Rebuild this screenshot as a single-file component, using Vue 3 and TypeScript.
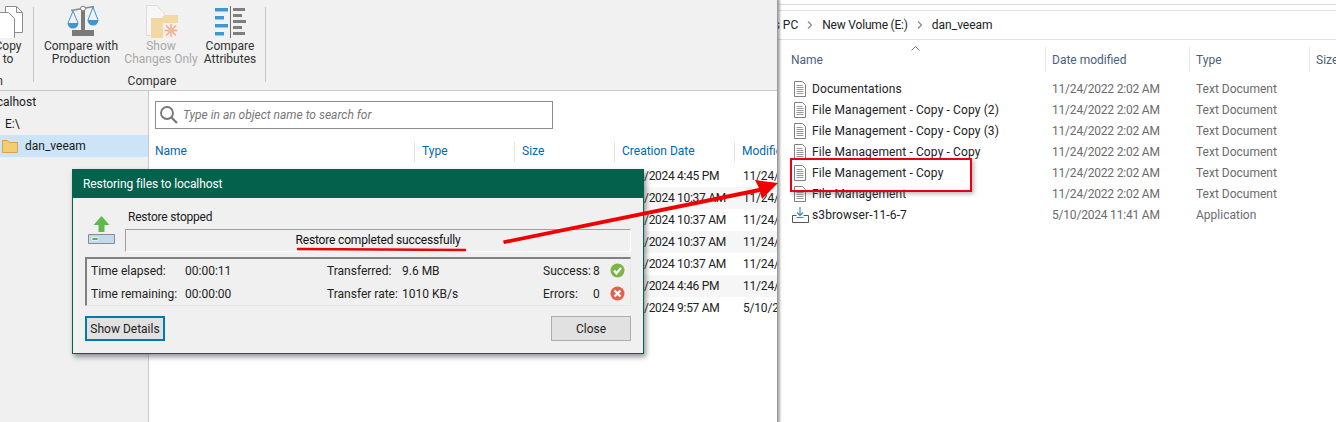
<script setup lang="ts">
type FileRow = { name: string; date: string; type: string; kind: 'doc' | 'app' }

const explorerFiles: FileRow[] = [
  { name: 'Documentations', date: '11/24/2022 2:02 AM', type: 'Text Document', kind: 'doc' },
  { name: 'File Management - Copy - Copy (2)', date: '11/24/2022 2:02 AM', type: 'Text Document', kind: 'doc' },
  { name: 'File Management - Copy - Copy (3)', date: '11/24/2022 2:02 AM', type: 'Text Document', kind: 'doc' },
  { name: 'File Management - Copy - Copy', date: '11/24/2022 2:02 AM', type: 'Text Document', kind: 'doc' },
  { name: 'File Management - Copy', date: '11/24/2022 2:02 AM', type: 'Text Document', kind: 'doc' },
  { name: 'File Management', date: '11/24/2022 2:02 AM', type: 'Text Document', kind: 'doc' },
  { name: 's3browser-11-6-7', date: '5/10/2024 11:41 AM', type: 'Application', kind: 'app' },
]

const backupRows = [
  { created: '1/24/2024 4:45 PM', modified: '11/24/2022 2:02 AM' },
  { created: '1/24/2024 10:37 AM', modified: '11/24/2022 2:02 AM' },
  { created: '1/24/2024 10:37 AM', modified: '11/24/2022 2:02 AM' },
  { created: '1/24/2024 10:37 AM', modified: '11/24/2022 2:02 AM' },
  { created: '1/24/2024 10:37 AM', modified: '11/24/2022 2:02 AM' },
  { created: '1/24/2024 4:46 PM', modified: '11/24/2022 2:02 AM' },
  { created: '1/24/2024 9:57 AM', modified: '5/10/2024 11:41 AM' },
]
</script>

<template>
  <div class="page">
    <section class="veeam">
      <header class="ribbon">
        <div class="group group-copy">
          <div class="tools">
            <div class="tool">
              <svg width="36" height="34" viewBox="0 0 36 34">
                <path d="M15.5 2.5h11l6 6v20h-17z" fill="#fff" stroke="#8c8c8c" />
                <path d="M26.5 2.5v6h6" fill="none" stroke="#8c8c8c" />
                <path d="M7.5 8.5h11l6 6v20h-17z" fill="#fff" stroke="#8c8c8c" />
              </svg>
              <span>Copy<br />to</span>
            </div>
          </div>
          <div class="group-label">Restoration</div>
        </div>
        <div class="sep"></div>
        <div class="group group-compare">
          <div class="tools">
            <div class="tool w-prod">
              <svg width="36" height="34" viewBox="0 0 36 34">
                <path d="M8 6.500 31 2.500" stroke="#8a8a8a" stroke-width="1.400" />
                <path d="M18 6h4v20h-4z" fill="#7a7a7a" />
                <path d="M9 26h22v6H9z" fill="#7a7a7a" />
                <circle cx="20" cy="4.500" r="2.400" fill="#fff" stroke="#7a7a7a" />
                <path d="M10 7 5 19M10 7l5 12M30 3l-5 13M30 3l5 13" fill="none" stroke="#3f97cf" />
                <path d="M4.500 19h11a5.500 5.500 0 0 1-11 0zM24.500 16h11a5.500 5.500 0 0 1-11 0z" fill="#3f97cf" />
              </svg>
              <span>Compare with<br />Production</span>
            </div>
            <div class="tool w-show disabled">
              <svg width="36" height="34" viewBox="0 0 36 34">
                <path d="M3.500 1.500h10l8 8v22h-18z" fill="#f7f7f7" stroke="#dcdcdc" />
                <path d="M8 14h11l2-3h14v23H8z" fill="#f2d9a4" />
                <path d="M20 19h15v15H20z" fill="#f7f0e6" />
                <path d="M28 20v13M21.500 26.500h13M23 21.500l10 10M33 21.500l-10 10" stroke="#efa58c" stroke-width="1.300" />
                <circle cx="28" cy="26.500" r="3" fill="#f4b8a0" />
              </svg>
              <span>Show<br />Changes Only</span>
            </div>
            <div class="tool w-attr">
              <svg width="36" height="34" viewBox="0 0 36 34">
                <path d="M3 4h13v3.500H3zM3 12h9v3.500H3zM3 20h13v3.500H3zM3 28h9v3.500H3z" fill="#3f97cf" />
                <path d="M18 2h1v32h-1z" fill="#6e6e6e" />
                <path d="M21 4h12v3H21zM21 10h9v3h-9zM21 16h13v3H21zM21 22h9v3h-9zM21 28h12v3H21z" fill="#7f7f7f" />
              </svg>
              <span>Compare<br />Attributes</span>
            </div>
          </div>
          <div class="group-label">Compare</div>
        </div>
        <div class="sep"></div>
      </header>

      <div class="workspace">
        <aside class="tree">
          <div class="node node-host">localhost</div>
          <div class="node node-drive">E:\</div>
          <div class="node node-folder">
            <svg width="16" height="14" viewBox="0 0 16 14">
              <path d="M.5 3.500V1.500h5l1.500 2h8.500v10H.5z" fill="#f3cd75" stroke="#d9a441" />
            </svg>
            <span>dan_veeam</span>
          </div>
        </aside>
        <main class="backup">
          <div class="search">
            <svg width="20" height="20" viewBox="0 0 20 20">
              <circle cx="8" cy="8" r="6" fill="none" stroke="#777" stroke-width="1.800" />
              <path d="m12.500 12.500 5.500 5.500" stroke="#777" stroke-width="2.200" />
            </svg>
            <span>Type in an object name to search for</span>
          </div>
          <div class="backup-head">
            <span>Name</span><span>Type</span><span>Size</span><span>Creation Date</span><span>Modified</span>
          </div>
          <div v-for="(row, i) in backupRows" :key="i" class="backup-row" :class="{ striped: i % 2 === 1 }">
            <span class="doc-slot">
              <svg width="12" height="15" viewBox="0 0 12 15">
                <path d="M.5.500h8l3 3v11H.500z" fill="#fff" stroke="#8c8c8c" />
              </svg>
            </span>
            <span></span>
            <span></span>
            <span class="created">{{ row.created }}</span>
            <span class="modified">{{ row.modified }}</span>
          </div>
        </main>
      </div>
    </section>

    <section class="explorer">
      <div class="top-strip"></div>
      <nav class="crumbs">
        <span class="crumb-pc">This PC</span>
        <svg class="chev" width="6" height="8" viewBox="0 0 6 8"><path d="m1 .500 3.500 3.500L1 7.500" fill="none" stroke="#888" stroke-width="1.200" /></svg>
        <span class="crumb-volume">New Volume (E:)</span>
        <svg class="chev" width="6" height="8" viewBox="0 0 6 8"><path d="m1 .500 3.500 3.500L1 7.500" fill="none" stroke="#888" stroke-width="1.200" /></svg>
        <span>dan_veeam</span>
      </nav>
      <div class="explorer-head">
        <span class="col-name">
          Name
          <svg class="sort" width="9" height="5" viewBox="0 0 9 5"><path d="m.5 4.500 4-4 4 4" fill="none" stroke="#777" /></svg>
        </span>
        <span class="col-date">Date modified</span>
        <span class="col-type">Type</span>
        <span class="col-size">Size</span>
      </div>
      <div v-for="file in explorerFiles" :key="file.name" class="file-row" :class="file.kind">
        <svg v-if="file.kind === 'doc'" class="file-icon" width="14" height="16" viewBox="0 0 14 16">
          <path d="M1.500.500h8l3 3v12h-11z" fill="#fff" stroke="#7f7f7f" />
          <path d="M3.500 4.500h6M3.500 6.500h7M3.500 8.500h7M3.500 10.500h7M3.500 12.500h7" stroke="#999" />
        </svg>
        <svg v-else class="file-icon" width="17" height="16" viewBox="0 0 17 16">
          <path d="M.5 8.500h4M11.500 8.500h5v7H.5v-7" fill="none" stroke="#555" />
          <path d="M8 0v8M5 5.500l3 3 3-3" fill="none" stroke="#2f86c9" stroke-width="1.100" />
          <path d="M4.500 10.500h7" stroke="#2f86c9" />
        </svg>
        <span class="file-name">{{ file.name }}</span>
        <span class="file-meta col-date">{{ file.date }}</span>
        <span class="file-meta col-type">{{ file.type }}</span>
      </div>
    </section>

    <div class="dialog">
      <div class="dialog-title">Restoring files to localhost</div>
      <div class="dialog-body">
        <div class="status">
          <svg width="28" height="30" viewBox="0 0 28 30">
            <path d="M13.500 1 21.500 10h-5v7h-6v-7h-5z" fill="#63b84a" />
            <path d="M.5 19.500h26v9H.500z" fill="#c3d9ee" stroke="#8b8b8b" />
            <path d="M4 22.500h6v3H4z" fill="#5cb34a" stroke="#fff" stroke-width=".7" />
          </svg>
          <div class="status-text">
            <div class="status-title">Restore stopped</div>
            <div class="status-box">Restore completed successfully</div>
          </div>
        </div>
        <div class="stats">
          <span>Time elapsed:</span><span>00:00:11</span>
          <span>Transferred:</span><span>9.6 MB</span>
          <span>Success:</span><span class="count">8</span>
          <svg width="15" height="15" viewBox="0 0 15 15">
            <circle cx="7.500" cy="7.500" r="7" fill="#7ab648" />
            <path d="m4 7.500 2.500 2.800L11 5" fill="none" stroke="#fff" stroke-width="2.200" />
          </svg>
          <span>Time remaining:</span><span>00:00:00</span>
          <span>Transfer rate:</span><span>1010 KB/s</span>
          <span>Errors:</span><span class="count">0</span>
          <svg width="15" height="15" viewBox="0 0 15 15">
            <circle cx="7.500" cy="7.500" r="7" fill="#e2604f" />
            <path d="m4.500 4.500 6 6M10.500 4.500l-6 6" fill="none" stroke="#fff" stroke-width="2.400" />
          </svg>
        </div>
        <div class="actions">
          <button class="btn btn-focus">Show Details</button>
          <button class="btn">Close</button>
        </div>
      </div>
    </div>

    <svg class="markup" width="1336" height="422" viewBox="0 0 1336 422">
      <path d="M297 249 466 250" stroke="#f00000" stroke-width="2.500" fill="none" />
      <path d="M503 240.500 759 188 755 180 778 183 762 199 760 192 504 244z" fill="#f00000" />
    </svg>
    <div class="callout"></div>
  </div>
</template>

<style>
html,
body {
  margin: 0;
  background: #fff;
}
</style>

<style scoped>
.page {
  position: relative;
  display: flex;
  width: 1336px;
  height: 422px;
  overflow: hidden;
  background: #fff;
  color: #1a1a1a;
  font: 12px/16px Roboto, "Liberation Sans", sans-serif;
}

.veeam {
  display: flex;
  flex-direction: column;
  flex: none;
  width: 777px;
  border-right: 1px solid #9a9a9a;
  box-shadow: 1px 0 2px 1px rgba(70, 70, 70, 0.45);
  z-index: 1;
}

.ribbon {
  display: flex;
  flex: none;
  height: 90px;
  overflow: hidden;
  background: #f1f1f1;
  border-bottom: 1px solid #c9c9c9;
}

.group {
  flex: none;
  display: flex;
  flex-direction: column;
  align-items: center;
}

.group-copy {
  width: 73px;
  margin-left: -40px;
}

.group-copy .tools {
  align-self: flex-start;
  width: 96px;
  justify-content: center;
}

.group-copy .group-label {
  align-self: flex-end;
  margin-right: 30px;
}

.group-compare {
  width: 230px;
  margin-left: 1px;
}

.group-compare .group-label {
  margin-left: 4px;
}

.tools {
  display: flex;
  height: 73px;
}

.tool {
  display: flex;
  flex-direction: column;
  align-items: center;
  padding-top: 4px;
  line-height: 13px;
  text-align: center;
  white-space: nowrap;
  color: #333;
}

.tool svg {
  display: block;
  margin-bottom: 2px;
}

.tool span {
  display: block;
}

.w-prod {
  width: 92px;
}

.w-show {
  width: 68px;
}

.w-attr {
  width: 70px;
}

.disabled {
  color: #a9a9a9;
}

.group-label {
  line-height: 16px;
  color: #333;
  white-space: nowrap;
}

.sep {
  flex: none;
  width: 1px;
  height: 75px;
  margin-top: 7px;
  background: #c8c8c8;
}

.workspace {
  display: flex;
  flex: 1;
  min-height: 0;
}

.tree {
  flex: none;
  width: 148px;
  padding-top: 0;
  background: #f0f0f0;
  border-right: 1px solid #c9c9c9;
}

.node {
  display: flex;
  align-items: center;
  height: 22px;
}

.node-host {
  margin-left: -13px;
}

.node-drive {
  padding-left: 5px;
}

.node-folder {
  gap: 7px;
  padding-left: 2px;
  background: #cce4f7;
}

.backup {
  flex: 1;
  min-width: 0;
  overflow: hidden;
  background: #fff;
}

.search {
  display: flex;
  align-items: center;
  gap: 4px;
  box-sizing: border-box;
  width: 398px;
  height: 28px;
  margin: 10px 0 0 6px;
  padding-left: 3px;
  border: 1px solid #8c8c8c;
  color: #777;
  font-style: italic;
}

.backup-head,
.backup-row {
  display: grid;
  grid-template-columns: 267px 100px 100px 120px 1fr;
  padding-left: 6px;
  white-space: nowrap;
}

.backup-head {
  height: 28px;
  margin-top: 8px;
  align-items: center;
  color: #0067b0;
}

.backup-head span {
  position: relative;
}

.backup-head span + span::before {
  content: "";
  position: absolute;
  left: -8px;
  top: -1px;
  width: 1px;
  height: 20px;
  background: #e3e3e3;
}

.backup-row {
  align-items: center;
  height: 22px;
  color: #222;
}

.created {
  margin-left: -2px;
  letter-spacing: -0.3px;
}

.modified {
  padding-left: 1px;
  letter-spacing: -0.2px;
}

.striped {
  background: #f6f6f6;
}

.doc-slot {
  display: flex;
}

.explorer {
  flex: 1;
  min-width: 0;
  color: #222;
}

.top-strip {
  height: 5px;
  margin-top: 4px;
  border-top: 1px solid #dcdcdc;
  border-bottom: 1px solid #e4e4e4;
}

.crumbs {
  display: flex;
  align-items: center;
  height: 28px;
  margin-left: -21px;
  border-bottom: 1px solid #e0e0e0;
  white-space: nowrap;
}

.crumb-volume {
  letter-spacing: -0.2px;
}

.chev {
  margin: 0 9px;
}

.explorer-head {
  display: flex;
  align-items: center;
  height: 26px;
  margin: 7px 0 5px;
  color: #4c607a;
  white-space: nowrap;
}

.col-name {
  position: relative;
  flex: none;
  box-sizing: border-box;
  width: 267px;
  padding-left: 13px;
}

.sort {
  position: absolute;
  left: 133px;
  top: -6px;
}

.col-date,
.col-type,
.col-size {
  position: relative;
  flex: none;
}

.col-date {
  width: 144px;
  padding-left: 7px;
  box-sizing: border-box;
}

.col-type {
  width: 120px;
  padding-left: 7px;
  box-sizing: border-box;
}

.col-size {
  padding-left: 7px;
}

.explorer-head .col-date::before,
.explorer-head .col-type::before,
.explorer-head .col-size::before {
  content: "";
  position: absolute;
  left: 0;
  top: -5px;
  width: 1px;
  height: 25px;
  background: #e5e5e5;
}

.file-row {
  display: flex;
  align-items: center;
  height: 21px;
  white-space: nowrap;
}

.file-icon {
  flex: none;
  margin-left: 15px;
}

.file-name {
  flex: none;
  box-sizing: border-box;
  width: 238px;
  padding-left: 5px;
  letter-spacing: 0.12px;
}

.app .file-icon {
  margin-left: 14px;
}

.app .file-name {
  width: 236px;
  padding-left: 3px;
}

.file-meta {
  color: #6b6b6b;
}

.file-meta.col-date {
  letter-spacing: -0.2px;
}

.dialog {
  position: absolute;
  left: 72px;
  top: 169px;
  box-sizing: border-box;
  width: 572px;
  height: 185px;
  z-index: 2;
  border: 1px solid #04614c;
  background: #f0f0f0;
  box-shadow: 2px 3px 5px rgba(60, 60, 60, 0.55);
}

.dialog-title {
  height: 28px;
  padding-left: 10px;
  background: #04614c;
  color: #fff;
  line-height: 28px;
  letter-spacing: -0.1px;
}

.dialog-body {
  padding: 0 12px;
}

.status {
  display: flex;
  align-items: flex-start;
  gap: 11px;
  padding: 11px 0 0 3px;
}

.status svg {
  flex: none;
  margin-top: 6px;
}

.status-text {
  flex: 1;
}

.status-title {
  padding-left: 1px;
  line-height: 16px;
  letter-spacing: -0.2px;
}

.status-box {
  height: 21px;
  margin: 4px 0 0 -2px;
  border: 1px solid #fff;
  border-color: #a0a0a0 #fff #fff #a0a0a0;
  line-height: 21px;
  text-align: center;
  color: #111;
  letter-spacing: -0.17px;
}

.stats {
  display: grid;
  grid-template-columns: 94px 142px 75px 141px 50px 17px 15px;
  align-items: center;
  height: 46px;
  margin-top: 5px;
  padding-left: 4px;
  border: 1px solid #e6e6e6;
  border-top: 2px solid #808080;
  border-left: 2px solid #808080;
  white-space: nowrap;
  color: #222;
}

.stats svg {
  display: block;
}

.actions {
  display: flex;
  justify-content: space-between;
  margin-top: 10px;
}

.btn {
  box-sizing: border-box;
  width: 80px;
  height: 25px;
  padding: 0;
  border: 1px solid #adadad;
  border-radius: 0;
  background: #e1e1e1;
  color: #222;
  font: inherit;
}

.btn-focus {
  border: 2px solid #0078b0;
}

.markup {
  position: absolute;
  left: 0;
  top: 0;
  z-index: 3;
  pointer-events: none;
}

.callout {
  position: absolute;
  left: 790px;
  top: 158px;
  box-sizing: border-box;
  width: 182px;
  height: 34px;
  z-index: 3;
  border: 2px solid #e60012;
  box-shadow: 2px 2px 4px rgba(80, 80, 80, 0.4);
}
</style>
